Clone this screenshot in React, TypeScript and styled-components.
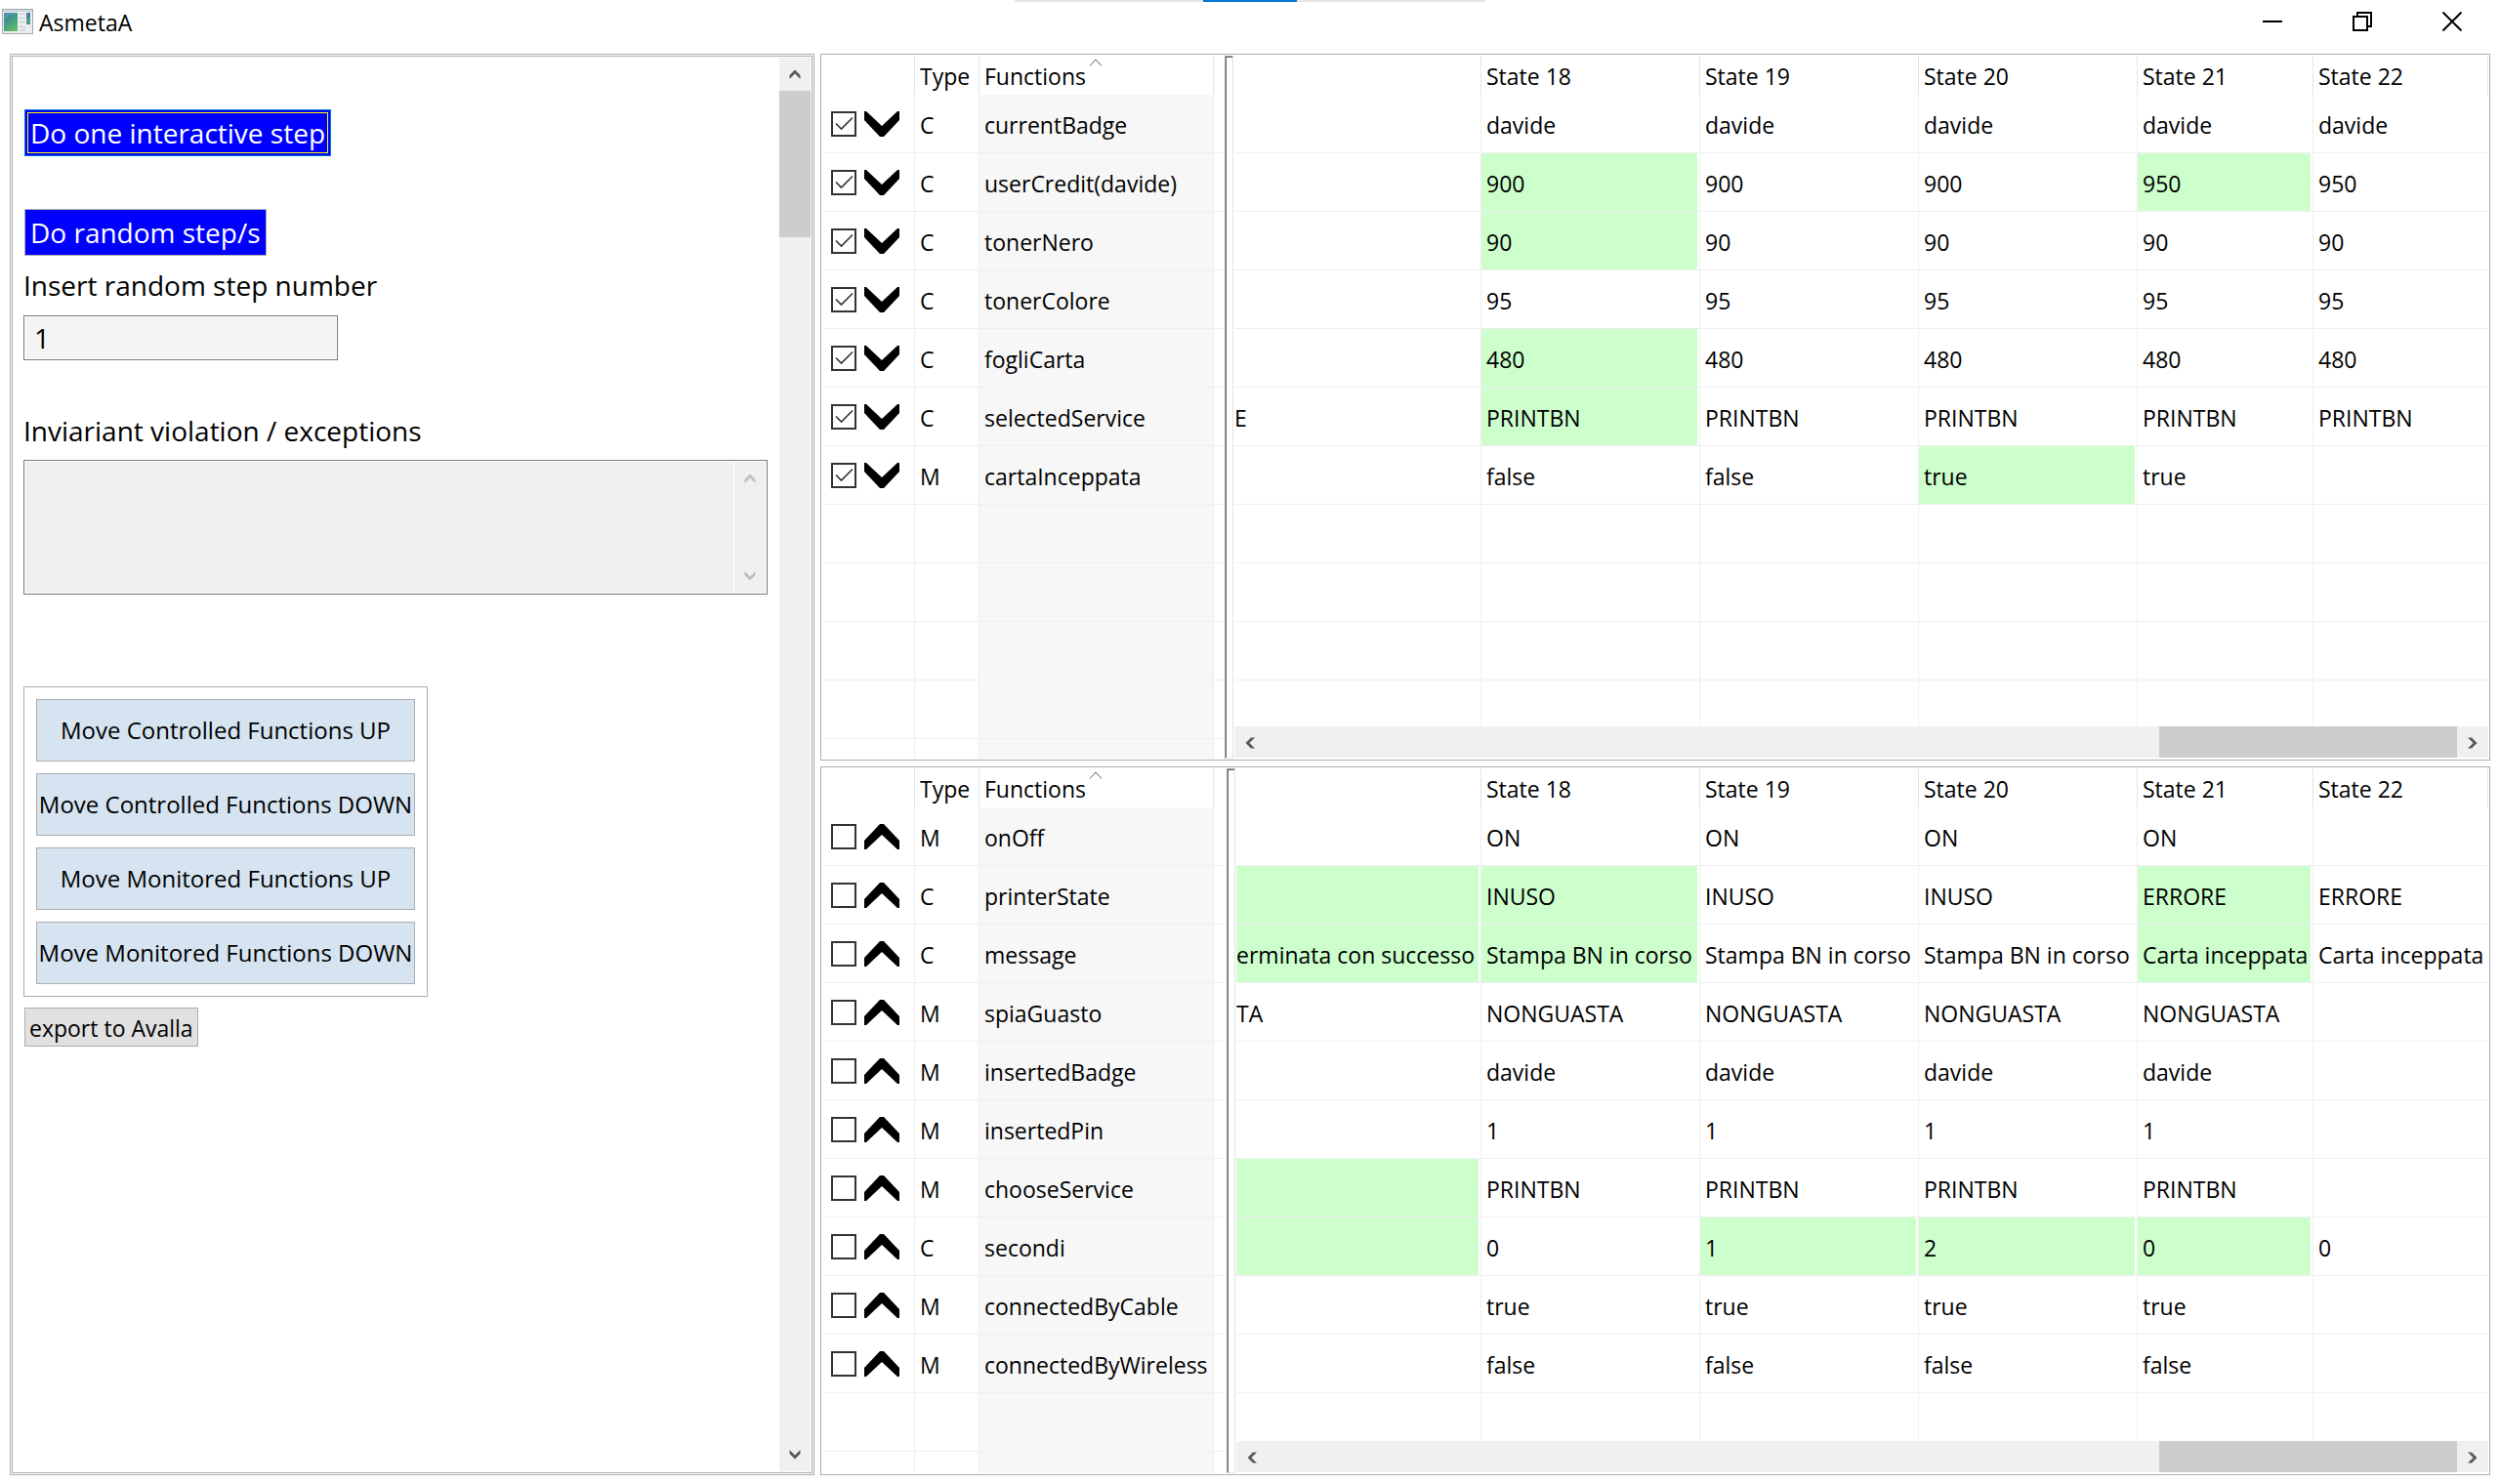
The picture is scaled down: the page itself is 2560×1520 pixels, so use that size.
import React, { useState } from "react";
import styled, { createGlobalStyle } from "styled-components";

const uiFont = `"Open Sans", "Noto Sans", sans-serif`;

const line = "#efefef";
const frame = "#abadb3";

const GlobalStyle = createGlobalStyle`
  *, *::before, *::after { box-sizing: border-box; }
  body { margin: 0; background: #fff; color: #000; font-family: ${uiFont}; }
  button, input, textarea { font: inherit; color: inherit; margin: 0; border-radius: 0; }
`;

/* ---------- window frame ---------- */

const Window = styled.div`
  display: flex;
  flex-direction: column;
  height: 100vh;
  background: #fff;
`;

const TitleBar = styled.header`
  position: relative;
  display: flex;
  align-items: center;
  height: 55px;
  padding: 0 3px 12px 2px;
`;

const Title = styled.h1`
  margin: 0 auto 0 6px;
  padding-top: 2px;
  font-size: 23px;
  line-height: 30px;
  font-weight: 400;
`;

const SnapBar = styled.div`
  position: absolute;
  top: 0;
  left: 50%;
  width: 482px;
  height: 2px;
  transform: translateX(-50%);
  background: linear-gradient(#0078d7, #0078d7) center / 96px 100% no-repeat #e5e5e5;
`;

const WindowButtons = styled.div`
  display: flex;
`;

const WindowButton = styled.button`
  display: grid;
  place-items: center;
  width: 92px;
  height: 42px;
  padding: 0;
  border: 0;
  background: none;
`;

const Workspace = styled.main`
  flex: 1;
  min-height: 0;
  display: grid;
  grid-template-columns: 824fr 1710fr;
  gap: 6px;
  padding: 0 10px 9px 10px;
`;

/* ---------- control panel ---------- */

const ControlPanel = styled.section`
  min-width: 0;
  display: flex;
  border: 3px double ${frame};
  padding: 1px;
`;

const Controls = styled.form`
  flex: 1;
  min-width: 0;
  display: flex;
  flex-direction: column;
  align-items: flex-start;
  padding: 53px 12px 0 10px;
`;

const StepButton = styled.button<{ $focused?: boolean }>`
  height: 48px;
  padding: 0 5px;
  margin: 0 0 54px 1px;
  border: 1px solid ${(p) => (p.$focused ? "#0078d7" : "#adadad")};
  outline: ${(p) => (p.$focused ? "1px solid #ffff00" : "none")};
  outline-offset: -4px;
  background: #00f;
  color: #fff;
  font-size: 28px;
  line-height: 36px;
`;

const RandomButton = styled(StepButton)`
  margin-bottom: 12px;
`;

const FieldLabel = styled.label`
  font-size: 28px;
  line-height: 36px;
`;

const StepInput = styled.input`
  width: 322px;
  height: 46px;
  margin: 13px 0 54px;
  padding: 0 10px;
  border: 1px solid #7a7a7a;
  box-shadow: inset 0 0 0 1px #fff;
  background: #f4f4f4;
  font-size: 28px;
`;

const ViolationBox = styled.div`
  align-self: stretch;
  display: flex;
  height: 138px;
  margin: 12px 0 94px;
  border: 1px solid #7a7a7a;
  box-shadow: inset 0 0 0 1px #fff;
  padding: 1px;
  background: #f0f0f0;
`;

const ViolationText = styled.textarea`
  flex: 1;
  min-width: 0;
  padding: 4px;
  border: 0;
  border-right: 1px solid #fff;
  background: transparent;
  resize: none;
  font-size: 23px;
`;

const MoveGroup = styled.fieldset`
  display: grid;
  gap: 12px;
  margin: 0 0 11px;
  padding: 12px;
  border: 1px solid #adadad;
`;

const MoveButton = styled.button`
  width: 388px;
  height: 64px;
  padding: 0;
  border: 1px solid #adadad;
  background: #d6e4f1;
  font-size: 24px;
  line-height: 30px;
  white-space: nowrap;
`;

const ExportButton = styled.button`
  height: 40px;
  margin-left: 1px;
  padding: 2px 4px 0;
  border: 1px solid #adadad;
  background: #e1e1e1;
  font-size: 23px;
  line-height: 30px;
`;

/* ---------- scroll bars ---------- */

const VBar = styled.div`
  display: flex;
  flex-direction: column;
  justify-content: space-between;
  width: 32px;
  background: #f0f0f0;
`;

const HBar = styled.div`
  display: flex;
  height: 33px;
  border-bottom: 1px solid #fff;
  background: #f0f0f0;
`;

const Arrow = styled.button`
  display: grid;
  place-items: center;
  flex: none;
  width: 32px;
  height: 34px;
  padding: 0;
  border: 0;
  background: none;
  color: #5a5a5a;
  &:disabled { color: #bfbfbf; }
`;

const VThumb = styled.div`
  height: 150px;
  margin-bottom: auto;
  background: #cdcdcd;
`;

const HThumb = styled.div`
  width: 305px;
  margin-left: auto;
  background: #cdcdcd;
`;

/* ---------- state tables ---------- */

const Panels = styled.div`
  min-width: 0;
  min-height: 0;
  display: grid;
  grid-template-rows: minmax(0, 724fr) minmax(0, 726fr);
  gap: 6px;
`;

const Panel = styled.section`
  min-height: 0;
  display: flex;
  border: 1px solid ${frame};
  padding: 1px;
`;

const FixedPane = styled.div<{ $wide?: boolean }>`
  flex: none;
  width: ${(p) => (p.$wide ? 414 : 412)}px;
  overflow: hidden;
`;

const Sash = styled.div`
  flex: none;
  width: 9px;
  margin-right: 1px;
  border: 1px solid #a0a0a0;
  border-right-color: #e3e3e3;
  border-bottom-color: #e3e3e3;
  box-shadow: inset 1px 1px 0 #696969;
`;

const StatePane = styled.div`
  flex: 1;
  min-width: 0;
  display: flex;
  flex-direction: column;
`;

const StateScroll = styled.div`
  flex: 1;
  min-height: 0;
  overflow: hidden;
`;

const Table = styled.table`
  width: 100%;
  table-layout: fixed;
  border-collapse: separate;
  border-spacing: 0;
  font-size: 23px;
  line-height: 30px;
  white-space: nowrap;
`;

const Head = styled.th`
  position: relative;
  height: 40px;
  padding: 2px 0 0 5px;
  border-right: 1px solid #e5e5e5;
  text-align: left;
  font-weight: 400;
  &:last-child { border-right-color: ${(p) => (p.abbr ? "#e5e5e5" : "transparent")}; }
`;

const SortMark = styled.svg`
  position: absolute;
  top: 3px;
  left: 50%;
  margin-left: -8px;
`;

const Cell = styled.td<{ $hot?: boolean; $shade?: boolean }>`
  height: 60px;
  padding: 0 ${(p) => (p.$shade ? 0 : 2)}px 0 0;
  border-right: 1px solid ${line};
  border-bottom: 1px solid ${line};
  background-color: ${(p) => (p.$hot ? "#ccffcc" : p.$shade ? "#f7f7f7" : "transparent")};
  background-clip: content-box;
  &:last-child { border-right-color: transparent; }
`;

const CellText = styled.span`
  display: block;
  padding: 2px 0 0 5px;
`;

const CutText = styled.span<{ $end?: boolean }>`
  display: flex;
  justify-content: ${(p) => (p.$end ? "flex-end" : "flex-start")};
  overflow: hidden;
  padding: 2px ${(p) => (p.$end ? 4 : 0)}px 0 0;
`;

const Marks = styled.span`
  display: flex;
  align-items: center;
  gap: 8px;
  padding-left: 9px;
`;

const CheckWrap = styled.span`
  display: grid;
  width: 26px;
  height: 26px;
  > * { grid-area: 1 / 1; }
  svg { pointer-events: none; }
`;

const Check = styled.input`
  appearance: none;
  width: 26px;
  height: 26px;
  border: 2px solid #333;
  background: #fff;
`;

/* ---------- drawings ---------- */

type Dir = "up" | "down" | "left" | "right";
const turn: Record<Dir, number> = { up: 0, right: 90, down: 180, left: 270 };

const Chevron = ({ dir }: { dir: Dir }) => (
  <svg width="14" height="14" viewBox="0 0 14 14" aria-hidden="true">
    <path
      d="M7 2.5 L12.5 8 V12 L7 6.5 L1.5 12 V8 Z"
      fill="currentColor"
      transform={`rotate(${turn[dir]} 7 7)`}
    />
  </svg>
);

const MoveMark = ({ up }: { up?: boolean }) => (
  <svg width="36" height="26" viewBox="0 0 36 26" aria-hidden="true">
    <path
      d={up ? "M16 0 H20 L36 17 V26 H34 L18 11 L2 26 H0 V17 Z" : "M16 26 H20 L36 9 V0 H34 L18 15 L2 0 H0 V9 Z"}
      fill="#000"
    />
  </svg>
);

const AppIcon = () => (
  <svg width="32" height="26" viewBox="0 0 32 26" aria-hidden="true">
    <defs>
      <linearGradient id="screen" x1="0" y1="0" x2="0.6" y2="1">
        <stop offset="0" stopColor="#3f74a3" />
        <stop offset="0.5" stopColor="#45998c" />
        <stop offset="1" stopColor="#5dbb6b" />
      </linearGradient>
    </defs>
    <rect x="0.5" y="0.5" width="31" height="25" fill="#eceef0" stroke="#a5a9ae" />
    <rect x="1" y="1" width="30" height="2" fill="#cdd5de" />
    <rect x="2" y="4" width="14" height="19" fill="url(#screen)" />
    <path d="M2 12 Q8 5 16 5 V4 H2 Z" fill="#fff" opacity="0.12" />
    <path d="M18 5.5h6M18 9.5h6M18 13.5h6M18 18.5h6M18 22h6" stroke="#cfd2d5" strokeWidth="1.5" />
    <rect x="25" y="4" width="4" height="12" fill="#4a9a8e" />
    <rect x="25" y="4" width="4" height="5" fill="#4a7fa8" />
  </svg>
);

/* ---------- data ---------- */

type StateCell = string | { v: string; hot: true };
const h = (v: string): StateCell => ({ v, hot: true });

interface FunctionRow {
  type: "C" | "M";
  name: string;
  previous?: { v: string; hot?: boolean; end?: boolean };
  states: StateCell[];
}

const stateNames = ["State 18", "State 19", "State 20", "State 21", "State 22"];

const shownRows: FunctionRow[] = [
  { type: "C", name: "currentBadge", states: ["davide", "davide", "davide", "davide", "davide"] },
  { type: "C", name: "userCredit(davide)", states: [h("900"), "900", "900", h("950"), "950"] },
  { type: "C", name: "tonerNero", states: [h("90"), "90", "90", "90", "90"] },
  { type: "C", name: "tonerColore", states: ["95", "95", "95", "95", "95"] },
  { type: "C", name: "fogliCarta", states: [h("480"), "480", "480", "480", "480"] },
  { type: "C", name: "selectedService", previous: { v: "E" }, states: [h("PRINTBN"), "PRINTBN", "PRINTBN", "PRINTBN", "PRINTBN"] },
  { type: "M", name: "cartaInceppata", states: ["false", "false", h("true"), "true", ""] },
];

const otherRows: FunctionRow[] = [
  { type: "M", name: "onOff", states: ["ON", "ON", "ON", "ON", ""] },
  { type: "C", name: "printerState", previous: { v: "", hot: true }, states: [h("INUSO"), "INUSO", "INUSO", h("ERRORE"), "ERRORE"] },
  {
    type: "C",
    name: "message",
    previous: { v: "terminata con successo", hot: true, end: true },
    states: [h("Stampa BN in corso"), "Stampa BN in corso", "Stampa BN in corso", h("Carta inceppata"), "Carta inceppata"],
  },
  { type: "M", name: "spiaGuasto", previous: { v: "TA" }, states: ["NONGUASTA", "NONGUASTA", "NONGUASTA", "NONGUASTA", ""] },
  { type: "M", name: "insertedBadge", states: ["davide", "davide", "davide", "davide", ""] },
  { type: "M", name: "insertedPin", states: ["1", "1", "1", "1", ""] },
  { type: "M", name: "chooseService", previous: { v: "", hot: true }, states: ["PRINTBN", "PRINTBN", "PRINTBN", "PRINTBN", ""] },
  { type: "C", name: "secondi", previous: { v: "", hot: true }, states: ["0", h("1"), h("2"), h("0"), "0"] },
  { type: "M", name: "connectedByCable", states: ["true", "true", "true", "true", ""] },
  { type: "M", name: "connectedByWireless", states: ["false", "false", "false", "false", ""] },
];

const ROW_SLOTS = 12;

function StatePanel({ rows, selected }: { rows: FunctionRow[]; selected?: boolean }) {
  const [checked, setChecked] = useState<boolean[]>(rows.map(() => !!selected));
  const blanks = Array.from({ length: ROW_SLOTS - rows.length });
  const toggle = (i: number) => setChecked((c) => c.map((v, n) => (n === i ? !v : v)));

  return (
    <Panel>
      <FixedPane $wide={!selected}>
        <Table>
          <colgroup>
            <col style={{ width: 95 }} />
            <col style={{ width: 66 }} />
            <col style={{ width: 240 }} />
            <col />
          </colgroup>
          <thead>
            <tr>
              <Head />
              <Head scope="col">Type</Head>
              <Head scope="col">
                Functions
                <SortMark width="14" height="8" viewBox="0 0 14 8" aria-hidden="true">
                  <path d="M1 7.5 L7 1 L13 7.5" fill="none" stroke="#5c5c5c" />
                </SortMark>
              </Head>
              <Head />
            </tr>
          </thead>
          <tbody>
            {rows.map((r, i) => (
              <tr key={r.name}>
                <Cell>
                  <Marks>
                    <CheckWrap>
                      <Check type="checkbox" aria-label={r.name} checked={checked[i]} onChange={() => toggle(i)} />
                      {checked[i] && (
                        <svg width="26" height="26" viewBox="0 0 26 26" aria-hidden="true">
                          <path d="M5 12.5 L10.5 18 L22 6.5" fill="none" stroke="#333" strokeWidth="1.6" />
                        </svg>
                      )}
                    </CheckWrap>
                    <MoveMark up={!selected} />
                  </Marks>
                </Cell>
                <Cell><CellText>{r.type}</CellText></Cell>
                <Cell $shade><CellText>{r.name}</CellText></Cell>
                <Cell />
              </tr>
            ))}
            {blanks.map((_, i) => (
              <tr key={i}>
                <Cell /><Cell /><Cell $shade /><Cell />
              </tr>
            ))}
          </tbody>
        </Table>
      </FixedPane>
      <Sash />
      <StatePane>
        <StateScroll>
          <Table>
            <colgroup>
              <col />
              <col style={{ width: 224 }} />
              <col style={{ width: 224 }} />
              <col style={{ width: 224 }} />
              <col style={{ width: 180 }} />
              <col style={{ width: 179 }} />
            </colgroup>
            <thead>
              <tr>
                <Head />
                {stateNames.map((s) => (
                  <Head key={s} scope="col" abbr={s}>{s}</Head>
                ))}
              </tr>
            </thead>
            <tbody>
              {rows.map((r) => (
                <tr key={r.name}>
                  <Cell $hot={r.previous?.hot}>
                    {r.previous?.v && <CutText $end={r.previous.end}>{r.previous.v}</CutText>}
                  </Cell>
                  {r.states.map((s, i) => (
                    <Cell key={i} $hot={typeof s !== "string"}>
                      <CellText>{typeof s === "string" ? s : s.v}</CellText>
                    </Cell>
                  ))}
                </tr>
              ))}
              {blanks.map((_, i) => (
                <tr key={i}>
                  <Cell />
                  {stateNames.map((s) => <Cell key={s} />)}
                </tr>
              ))}
            </tbody>
          </Table>
        </StateScroll>
        <HBar>
          <Arrow type="button" aria-label="Scroll left"><Chevron dir="left" /></Arrow>
          <HThumb />
          <Arrow type="button" aria-label="Scroll right"><Chevron dir="right" /></Arrow>
        </HBar>
      </StatePane>
    </Panel>
  );
}

export default function App() {
  const [steps, setSteps] = useState("1");

  return (
    <Window>
      <GlobalStyle />
      <TitleBar>
        <AppIcon />
        <Title>AsmetaA</Title>
        <SnapBar />
        <WindowButtons>
          <WindowButton type="button" aria-label="Minimize">
            <svg width="20" height="20" viewBox="0 0 20 20"><path d="M0 10h20" stroke="#000" strokeWidth="2" /></svg>
          </WindowButton>
          <WindowButton type="button" aria-label="Restore">
            <svg width="20" height="20" viewBox="0 0 20 20" fill="none" stroke="#000" strokeWidth="2">
              <path d="M1 5h14v14H1zM5 5V1h14v14h-4" />
            </svg>
          </WindowButton>
          <WindowButton type="button" aria-label="Close">
            <svg width="20" height="20" viewBox="0 0 20 20"><path d="M0.5 0.5l19 19M19.5 0.5l-19 19" stroke="#000" strokeWidth="2" /></svg>
          </WindowButton>
        </WindowButtons>
      </TitleBar>

      <Workspace>
        <ControlPanel>
          <Controls onSubmit={(e) => e.preventDefault()}>
            <StepButton type="button" $focused>Do one interactive step</StepButton>
            <RandomButton type="button">Do random step/s</RandomButton>
            <FieldLabel htmlFor="steps">Insert random step number</FieldLabel>
            <StepInput id="steps" value={steps} onChange={(e) => setSteps(e.target.value)} />
            <FieldLabel htmlFor="violations">Inviariant violation / exceptions</FieldLabel>
            <ViolationBox>
              <ViolationText id="violations" readOnly value="" />
              <VBar>
                <Arrow type="button" disabled aria-label="Scroll up"><Chevron dir="up" /></Arrow>
                <Arrow type="button" disabled aria-label="Scroll down"><Chevron dir="down" /></Arrow>
              </VBar>
            </ViolationBox>
            <MoveGroup>
              <MoveButton type="button">Move Controlled Functions UP</MoveButton>
              <MoveButton type="button">Move Controlled Functions DOWN</MoveButton>
              <MoveButton type="button">Move Monitored Functions UP</MoveButton>
              <MoveButton type="button">Move Monitored Functions DOWN</MoveButton>
            </MoveGroup>
            <ExportButton type="button">export to Avalla</ExportButton>
          </Controls>
          <VBar>
            <Arrow type="button" aria-label="Scroll up"><Chevron dir="up" /></Arrow>
            <VThumb />
            <Arrow type="button" aria-label="Scroll down"><Chevron dir="down" /></Arrow>
          </VBar>
        </ControlPanel>

        <Panels>
          <StatePanel rows={shownRows} selected />
          <StatePanel rows={otherRows} />
        </Panels>
      </Workspace>
    </Window>
  );
}
